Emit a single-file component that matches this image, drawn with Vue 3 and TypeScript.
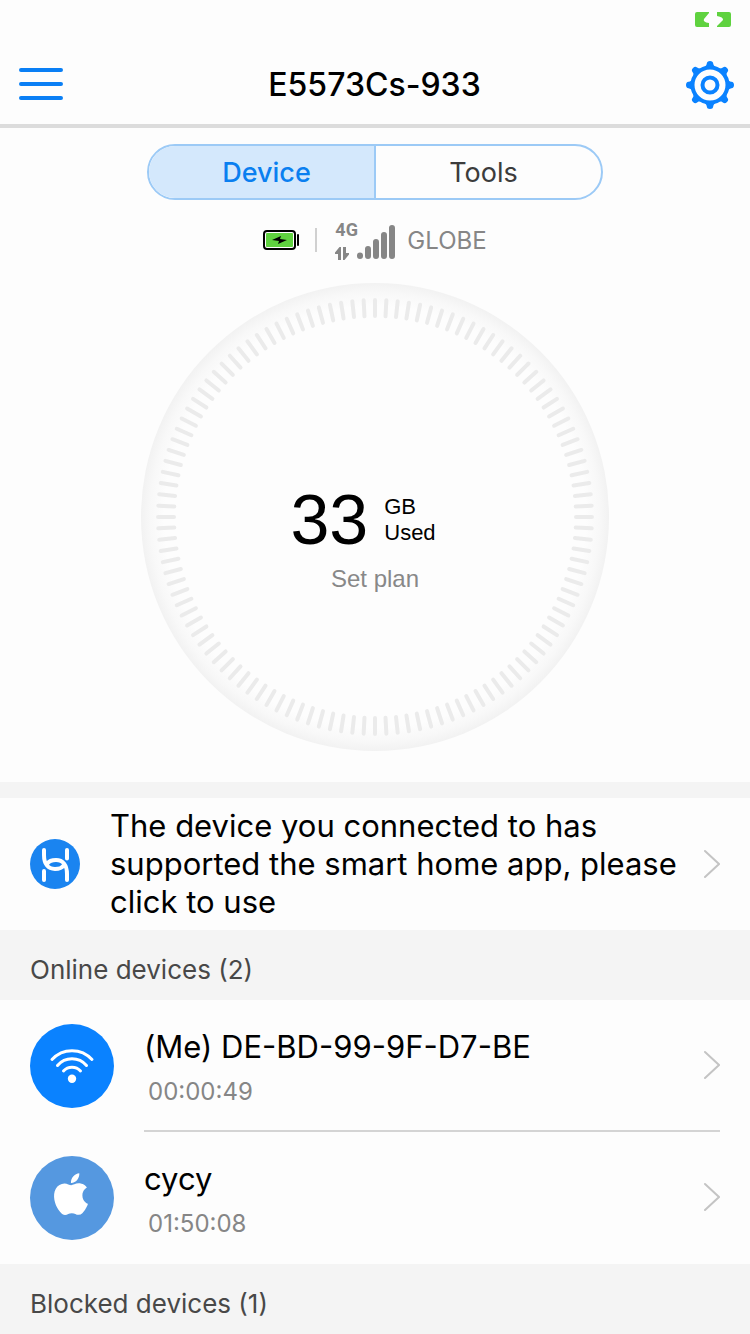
<script setup lang="ts">
interface Device {
  name: string
  time: string
  kind: 'wifi' | 'apple'
}

const devices: Device[] = [
  { name: '(Me) DE-BD-99-9F-D7-BE', time: '00:00:49', kind: 'wifi' },
  { name: 'cycy', time: '01:50:08', kind: 'apple' },
]

const ticks: number[] = Array.from({ length: 120 }, (_, i) => i * 3)
const teeth: number[] = Array.from({ length: 8 }, (_, i) => i * 45)
</script>

<template>
  <div class="app">
    <header class="top">
      <div class="status">
        <svg class="charge" width="36" height="15" viewBox="0 0 36 15" aria-hidden="true">
          <path d="M2 0H14V1L9 7Q7.500 10 14 11V15H2Q0 15 0 13V2Q0 0 2 0ZM22 0H34Q36 0 36 2V13Q36 15 34 15H22V14L28 8Q28.500 5 22 4Z" />
        </svg>
      </div>
      <div class="bar">
        <button class="icon-button" type="button" aria-label="Menu">
          <svg width="44" height="48" viewBox="0 0 44 48">
            <path class="line" d="M2 9H42M2 23H42M2 37H42" />
          </svg>
        </button>
        <h1>E5573Cs-933</h1>
        <button class="icon-button" type="button" aria-label="Settings">
          <svg width="48" height="48" viewBox="0 0 48 48">
            <path
              v-for="a in teeth"
              :key="a"
              class="tooth"
              d="M16 8Q20.500 5.500 20.800 2.500Q21 0 24 0Q27 0 27.200 2.500Q27.500 5.500 32 8Z"
              :transform="`rotate(${a} 24 24)`"
            />
            <circle class="gear" cx="24" cy="24" r="17.500" />
            <circle class="gear" cx="24" cy="24" r="7.500" />
          </svg>
        </button>
      </div>
    </header>

    <main>
      <section class="overview">
        <div class="tabs" role="tablist">
          <button class="tab active" type="button" role="tab" aria-selected="true">Device</button>
          <button class="tab" type="button" role="tab" aria-selected="false">Tools</button>
        </div>

        <div class="network">
          <svg width="36" height="20" viewBox="0 0 36 20" aria-hidden="true">
            <rect class="cell" x="1" y="1" width="31" height="18" rx="3" />
            <rect class="cell-fill" x="3" y="3" width="27" height="14" rx="1" />
            <rect x="34" y="4" width="2" height="12" rx="1" />
            <path d="M9 10L18 6L17 9L24 10L15 14L16 11Z" />
          </svg>
          <span class="divider"></span>
          <div class="radio">
            <span>4G</span>
            <svg width="14" height="13" viewBox="0 0 14 13" aria-hidden="true">
              <path d="M6 0V13H3V7H0V5.500L4.500 0ZM8 0H11V6H14V7.500L9.500 13H8Z" />
            </svg>
          </div>
          <svg class="signal" width="38" height="34" viewBox="0 0 38 34" aria-hidden="true">
            <path d="M3 31V30.500M11 24V31M19 17V31M27 10V31M35 3V31" />
          </svg>
          <span class="carrier">GLOBE</span>
        </div>

        <div class="gauge">
          <svg class="dial" viewBox="0 0 470 470" aria-hidden="true">
            <defs>
              <radialGradient id="rim">
                <stop offset="0.9" stop-color="#fdfdfd" />
                <stop offset="0.96" stop-color="#f8f8f8" />
                <stop offset="1" stop-color="#f2f2f2" />
              </radialGradient>
            </defs>
            <circle cx="235" cy="235" r="234" fill="url(#rim)" />
            <path
              v-for="a in ticks"
              :key="a"
              class="tick"
              d="M235 18V34"
              :transform="`rotate(${a} 235 235)`"
            />
          </svg>
          <div class="usage">
            <div class="amount">
              <strong>33</strong>
              <span>GB<br />Used</span>
            </div>
            <button class="plan" type="button">Set plan</button>
          </div>
        </div>
      </section>

      <button class="notice" type="button">
        <svg width="50" height="50" viewBox="0 0 50 50" aria-hidden="true">
          <circle cx="25" cy="25" r="25" fill="#1a84f0" />
          <path
            class="link-mark"
            d="M14 11V16C14 25 18 30 25 30C29 30 32 29 33.500 26.500M37 41V35C37 26 33 21 26 21C22 21 19 22 17.500 24.500M37 11V19.500M14 41V32"
          />
        </svg>
        <span>The device you connected to has supported the smart home app, please click to use</span>
        <svg class="chevron" width="18" height="30" viewBox="0 0 18 30" aria-hidden="true">
          <path d="M3 2L17 15L3 28" />
        </svg>
      </button>

      <h2>Online devices (2)</h2>
      <ul>
        <li v-for="d in devices" :key="d.name">
          <button class="device" type="button">
            <svg v-if="d.kind === 'wifi'" width="84" height="84" viewBox="0 0 84 84" aria-hidden="true">
              <circle cx="42" cy="42" r="42" fill="#0a82ff" />
              <path class="waves" d="M22 35.500A27 27 0 0 1 62 35.500M27.500 41.500A19 19 0 0 1 56.500 41.500M33.500 47A11.500 11.500 0 0 1 50.500 47" />
              <circle cx="42" cy="54.700" r="4.200" fill="#fff" />
            </svg>
            <svg v-else width="84" height="84" viewBox="0 0 84 84" aria-hidden="true">
              <circle cx="42" cy="42" r="42" fill="#5598e0" />
              <path
                fill="#fff"
                transform="translate(20.200 17.300) scale(1.735)"
                d="M12.152 6.896c-.948 0-2.415-1.078-3.96-1.04-2.04.027-3.91 1.183-4.961 3.014-2.117 3.675-.546 9.103 1.519 12.09 1.013 1.454 2.208 3.09 3.792 3.039 1.52-.065 2.09-.987 3.935-.987 1.831 0 2.35.987 3.96.948 1.637-.026 2.676-1.48 3.676-2.948 1.156-1.688 1.636-3.325 1.662-3.415-.039-.013-3.182-1.221-3.22-4.857-.026-3.04 2.48-4.494 2.597-4.559-1.429-2.09-3.623-2.324-4.39-2.376-2-.156-3.675 1.09-4.61 1.09zM15.53 3.83c.843-1.012 1.4-2.427 1.245-3.83-1.207.052-2.662.805-3.532 1.818-.78.896-1.454 2.338-1.273 3.714 1.338.104 2.715-.688 3.559-1.701"
              />
            </svg>
            <span class="detail">
              <span class="text">
                <span class="name">{{ d.name }}</span>
                <span class="time">{{ d.time }}</span>
              </span>
              <svg class="chevron" width="18" height="30" viewBox="0 0 18 30" aria-hidden="true">
                <path d="M3 2L17 15L3 28" />
              </svg>
            </span>
          </button>
        </li>
      </ul>
      <h2>Blocked devices (1)</h2>
    </main>
  </div>
</template>

<style>
body {
  margin: 0;
  background: #fdfdfd;
}
</style>

<style scoped>
.app {
  font-family: Inter, "Liberation Sans", sans-serif;
  color: #000;
  background: #fdfdfd;
}

button {
  margin: 0;
  padding: 0;
  border: 0;
  background: none;
  font: inherit;
  color: inherit;
  text-align: left;
  cursor: pointer;
}

svg {
  display: block;
  flex: none;
}

.top {
  border-bottom: 4px solid #dcdcdc;
}

.status {
  display: flex;
  justify-content: flex-end;
  align-items: center;
  height: 38px;
  padding: 0 19px;
}

.charge {
  fill: #5fd23f;
}

.bar {
  display: flex;
  justify-content: space-between;
  align-items: center;
  padding: 23px 16px 15px 19px;
}

.line {
  fill: none;
  stroke: #0a7ff5;
  stroke-width: 4;
  stroke-linecap: round;
}

.tooth {
  fill: #0a82ff;
}

.gear {
  fill: none;
  stroke: #0a82ff;
  stroke-width: 4;
}

h1 {
  margin: 0;
  font-size: 32px;
  line-height: 40px;
  font-weight: 500;
}

.overview {
  display: flex;
  flex-direction: column;
  align-items: center;
  padding: 16px 16px 30px;
  border-bottom: 16px solid #f4f4f4;
}

.tabs {
  display: flex;
  box-sizing: border-box;
  width: 100%;
  max-width: 456px;
  border: 2px solid #9ccaf6;
  border-radius: 28px;
  overflow: hidden;
}

.tab {
  flex: 1;
  height: 52px;
  padding-right: 10px;
  font-size: 27px;
  text-align: center;
  color: #3c3c3c;
}

.tab.active {
  padding: 0 0 0 10px;
  border-right: 2px solid #9ccaf6;
  background: #d4e8fc;
  color: #0a7ff0;
  font-weight: 500;
}

.network {
  display: flex;
  align-items: center;
  height: 42px;
  margin-top: 19px;
  color: #868686;
}

.cell {
  fill: #fff;
  stroke: #000;
  stroke-width: 2;
}

.cell-fill {
  fill: #5fd23f;
}

.divider {
  width: 2px;
  height: 24px;
  margin: 0 18px 0 16px;
  background: #d0d0d0;
}

.radio {
  display: flex;
  flex-direction: column;
  align-items: flex-start;
  gap: 8px;
  width: 22px;
  font-family: Roboto, "Liberation Sans", sans-serif;
  font-size: 18px;
  font-weight: 700;
  line-height: 18px;
  fill: #868686;
}

.signal {
  margin-top: 4px;
  fill: none;
  stroke: #868686;
  stroke-width: 6;
  stroke-linecap: round;
}

.carrier {
  margin-left: 12px;
  font-size: 24px;
}

.gauge {
  display: grid;
  place-items: center;
  width: 100%;
  max-width: 470px;
  margin-top: 21px;
}

.dial,
.usage {
  grid-area: 1 / 1;
}

.dial {
  width: 100%;
}

.tick {
  stroke: #ebebeb;
  stroke-width: 4;
  stroke-linecap: round;
}

.usage {
  display: flex;
  flex-direction: column;
  align-items: center;
  gap: 9px;
  margin-top: 42px;
  font-family: "Liberation Sans", sans-serif;
}

.amount {
  display: flex;
  align-items: center;
  gap: 16px;
  margin-right: 24px;
}

.amount strong {
  font-size: 70px;
  line-height: 72px;
  font-weight: 400;
}

.amount span {
  font-size: 22px;
  line-height: 26px;
}

.plan {
  font-size: 24px;
  line-height: 28px;
  color: #888;
}

.notice {
  display: flex;
  align-items: center;
  gap: 20px;
  width: 100%;
  min-height: 132px;
  padding: 9px 30px;
}

.notice span {
  flex: 1;
  padding-left: 10px;
  font-size: 31px;
  line-height: 38px;
}

.link-mark {
  fill: none;
  stroke: #fff;
  stroke-width: 4;
  stroke-linecap: round;
}

.chevron {
  fill: none;
  stroke: #c4c4c4;
  stroke-width: 2;
  stroke-linecap: round;
}

h2 {
  margin: 0;
  padding: 25px 30px 15px;
  background: #f4f4f4;
  color: #484848;
  font-size: 26px;
  line-height: 30px;
  font-weight: 400;
}

ul {
  margin: 0;
  padding: 0;
  list-style: none;
}

.device {
  display: flex;
  align-items: center;
  gap: 30px;
  width: 100%;
  padding: 0 30px;
}

.waves {
  fill: none;
  stroke: #fff;
  stroke-width: 3;
  stroke-linecap: round;
}

.detail {
  display: flex;
  flex: 1;
  align-items: center;
  justify-content: space-between;
  box-sizing: border-box;
  height: 132px;
  border-bottom: 2px solid #d4d4d4;
}

li:last-child .detail {
  border-bottom-color: transparent;
}

.text {
  display: flex;
  flex-direction: column;
  gap: 11px;
  padding-top: 5px;
}

.name {
  font-size: 31px;
  line-height: 38px;
}

.time {
  padding-left: 4px;
  font-size: 24px;
  line-height: 30px;
  color: #868686;
}
</style>
